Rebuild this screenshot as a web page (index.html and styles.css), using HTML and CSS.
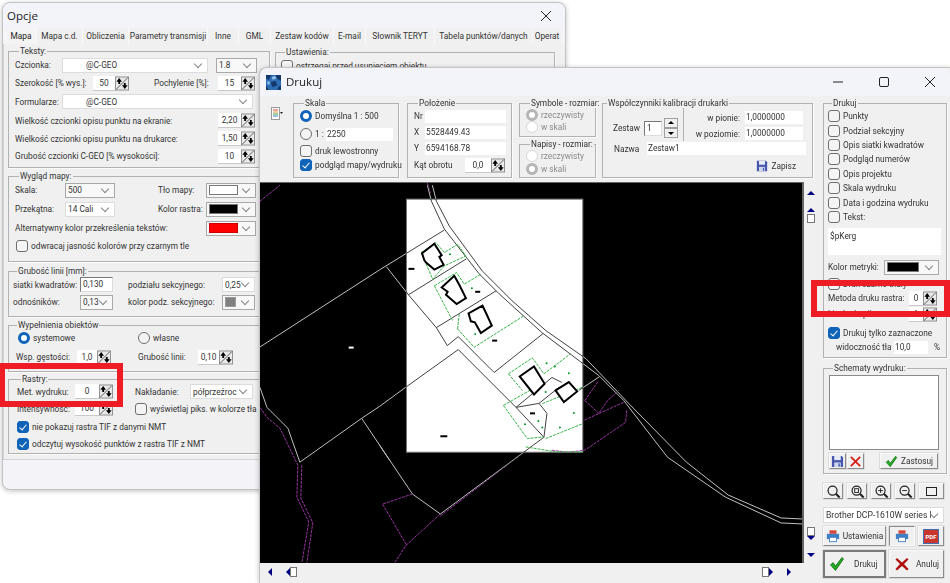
FILE: index.html
```html
<!DOCTYPE html>
<html lang="pl">
<head>
    <meta charset="UTF-8">
    <title>Opcje / Drukuj</title>
    <link rel="stylesheet" href="styles.css">
</head>
<body>
    <svg class="defs" aria-hidden="true">
        <symbol id="spin" viewBox="0 0 15 15">
            <rect x=".5" y=".5" width="14" height="14" fill="#e9e9e9" stroke="#8c8c8c"/>
            <path d="M1 14L14 1" stroke="#555" fill="none"/>
            <path d="M4.5 1.5L7.5 5.5H5.5V8H3.5V5.5H1.5Z M10.5 13.5L7.5 9.5H9.5V7H11.5V9.5H13.5Z" fill="#000"/>
        </symbol>
        <symbol id="floppy" viewBox="0 0 14 14">
            <path d="M1 1H11.5L13 2.5V13H1Z" fill="#4657ad"/>
            <rect x="3.5" y="1" width="7" height="4.5" fill="#e8ecf8"/>
            <rect x="3.5" y="8" width="7" height="5" fill="#d0d6ee"/>
            <rect x="8" y="9" width="1.5" height="3.5" fill="#4657ad"/>
        </symbol>
        <symbol id="redx" viewBox="0 0 14 14">
            <path d="M2 2L12 12M12 2L2 12" stroke="#d8201a" stroke-width="2" fill="none"/>
        </symbol>
        <symbol id="check" viewBox="0 0 16 16">
            <path d="M1.5 9L4 6.5L6.5 10L13 1.5L14.5 3L6.5 14.5Z" fill="#1faa1f" stroke="#0b5c0b" stroke-width=".7"/>
        </symbol>
        <symbol id="cross" viewBox="0 0 16 16">
            <path d="M3 2L8 6.5L13 2L14.5 3.5L10 8L14.5 13L13 14.5L8 10L3 14.5L1.5 13L6 8L1.5 3.5Z" fill="#b01010"/>
        </symbol>
        <symbol id="printer" viewBox="0 0 16 16">
            <rect x="4" y="1.5" width="8" height="4" fill="#d8453a"/>
            <rect x="1" y="5.5" width="14" height="6" fill="#3f7fc4"/>
            <rect x="4" y="9.5" width="8" height="5" fill="#fff" stroke="#3f7fc4"/>
        </symbol>
        <symbol id="glass" viewBox="0 0 16 16">
            <circle cx="7" cy="7" r="4.8" fill="none" stroke="#222" stroke-width="1.3"/>
            <path d="M10.5 10.5L14.5 14.5" stroke="#222" stroke-width="2.2"/>
        </symbol>
    </svg>

    <!-- okno opcji -->
    <div class="window options">
        <div class="titlebar">
            <span class="title">Opcje</span>
            <svg class="win-x" viewBox="0 0 10 10"><path d="M0 0L10 10M10 0L0 10"/></svg>
        </div>
        <div class="tabs">
            <span class="tab tab-active">Mapa</span>
            <span class="tab">Mapa c.d.</span>
            <span class="tab">Obliczenia</span>
            <span class="tab">Parametry transmisji</span>
            <span class="tab">Inne</span>
            <span class="tab">GML</span>
            <span class="tab">Zestaw kodów</span>
            <span class="tab">E-mail</span>
            <span class="tab">Słownik TERYT</span>
            <span class="tab">Tabela punktów/danych</span>
            <span class="tab">Operat</span>
        </div>
        <div class="panel">
            <div class="panel-left">
                <fieldset class="group g-teksty">
                    <legend>Teksty:</legend>
                    <div class="row">
                        <span class="lbl w47">Czcionka:</span>
                        <span class="combo w146"><span class="combo-text pad-font">@C-GEO</span><i class="chev"></i></span>
                        <span class="combo combo-raised w41 ml8"><span class="combo-text">1.8</span><i class="chev"></i></span>
                    </div>
                    <div class="row">
                        <span class="lbl w78">Szerokość [% wys.]:</span>
                        <span class="spin w36"><b class="spin-val">50</b><svg class="spin-btn"><use href="#spin"/></svg></span>
                        <span class="lbl w64 ml25">Pochylenie [%]:</span>
                        <span class="spin w37"><b class="spin-val">15</b><svg class="spin-btn"><use href="#spin"/></svg></span>
                    </div>
                    <div class="row">
                        <span class="lbl w47">Formularze:</span>
                        <span class="combo w191"><span class="combo-text pad-font">@C-GEO</span><i class="chev"></i></span>
                    </div>
                    <div class="row">
                        <span class="lbl w203">Wielkość czcionki opisu punktu na ekranie:</span>
                        <span class="spin w37"><b class="spin-val">2,20</b><svg class="spin-btn"><use href="#spin"/></svg></span>
                    </div>
                    <div class="row">
                        <span class="lbl w203">Wielkość czcionki opisu punktu na drukarce:</span>
                        <span class="spin w37"><b class="spin-val">1,50</b><svg class="spin-btn"><use href="#spin"/></svg></span>
                    </div>
                    <div class="row">
                        <span class="lbl w203">Grubość czcionki C-GEO [% wysokości]:</span>
                        <span class="spin w37"><b class="spin-val">10</b><svg class="spin-btn"><use href="#spin"/></svg></span>
                    </div>
                </fieldset>

                <fieldset class="group g-wyglad">
                    <legend>Wygląd mapy:</legend>
                    <div class="row">
                        <span class="lbl w50">Skala:</span>
                        <span class="combo combo-raised w50"><span class="combo-text">500</span><i class="chev"></i></span>
                        <span class="lbl w48 ml43">Tło mapy:</span>
                        <span class="combo combo-raised w50"><i class="swatch sw-white"></i><i class="chev"></i></span>
                    </div>
                    <div class="row">
                        <span class="lbl w50">Przekątna:</span>
                        <span class="combo w50"><span class="combo-text">14 Cali</span><i class="chev"></i></span>
                        <span class="lbl w48 ml43">Kolor rastra:</span>
                        <span class="combo combo-raised w50"><i class="swatch sw-black"></i><i class="chev"></i></span>
                    </div>
                    <div class="row">
                        <span class="lbl w191">Alternatywny kolor przekreślenia tekstów:</span>
                        <span class="combo combo-raised w50"><i class="swatch sw-red"></i><i class="chev"></i></span>
                    </div>
                    <label class="row"><i class="chk ml1"></i>odwracaj jasność kolorów przy czarnym tle</label>
                </fieldset>

                <fieldset class="group g-grubosc">
                    <legend>Grubość linii [mm]:</legend>
                    <div class="row">
                        <span class="lbl w67">siatki kwadratów:</span>
                        <span class="field field-sunken w33">0,130</span>
                        <span class="lbl w94 ml15">podziału sekcyjnego:</span>
                        <span class="combo w33"><span class="combo-text">0,25</span><i class="chev"></i></span>
                    </div>
                    <div class="row">
                        <span class="lbl w67">odnośników:</span>
                        <span class="combo combo-raised w33"><span class="combo-text">0,13</span><i class="chev"></i></span>
                        <span class="lbl w94 ml15">kolor podz. sekcyjnego:</span>
                        <span class="combo combo-raised w33"><i class="swatch sw-gray"></i><i class="chev"></i></span>
                    </div>
                </fieldset>

                <fieldset class="group g-wypelnienia">
                    <legend>Wypełnienia obiektów</legend>
                    <div class="row">
                        <i class="radio radio-on ml5"></i><span class="lbl w105">systemowe</span>
                        <i class="radio"></i><span>własne</span>
                    </div>
                    <div class="row">
                        <span class="lbl w61 ml3">Wsp. gęstości:</span>
                        <span class="spin w34"><b class="spin-val">1,0</b><svg class="spin-btn"><use href="#spin"/></svg></span>
                        <span class="lbl w60 ml27">Grubość linii:</span>
                        <span class="spin w35"><b class="spin-val">0,10</b><svg class="spin-btn"><use href="#spin"/></svg></span>
                    </div>
                </fieldset>

                <fieldset class="group g-rastry">
                    <legend>Rastry:</legend>
                    <div class="row">
                        <span class="lbl w58">Met. wydruku:</span>
                        <span class="spin w38"><b class="spin-val">0</b><svg class="spin-btn"><use href="#spin"/></svg></span>
                        <span class="lbl w55 ml22">Nakładanie:</span>
                        <span class="combo w63"><span class="combo-text">półprzeźroc</span><i class="chev"></i></span>
                    </div>
                    <div class="row">
                        <span class="lbl w58">Intensywność:</span>
                        <span class="spin w38"><b class="spin-val">100</b><svg class="spin-btn"><use href="#spin"/></svg></span>
                        <label class="check-inline ml22"><i class="chk"></i>wyświetlaj piks. w kolorze tła</label>
                    </div>
                    <label class="row"><i class="chk chk-on"></i>nie pokazuj rastra TIF z danymi NMT</label>
                    <label class="row"><i class="chk chk-on"></i>odczytuj wysokość punktów z rastra TIF z NMT</label>
                </fieldset>
            </div>
            <fieldset class="group g-ustawienia">
                <legend>Ustawienia:</legend>
                <label class="row"><i class="chk"></i>ostrzegaj przed usunięciem obiektu</label>
            </fieldset>
        </div>
    </div>

    <!-- okno wydruku -->
    <div class="window print">
        <div class="titlebar print-title">
            <svg class="app-icon" viewBox="0 0 16 16">
                <rect width="16" height="16" fill="#2f6cb3"/>
                <path d="M0 0H6L3 5L0 4Z M10 0H16V6L12 4Z M5 8L10 6L12 11L7 13Z M0 11L3 16H0Z M13 13L16 11V16H12Z" fill="#12386e"/>
                <path d="M6 2L10 1L11 4L7 5Z M1 7L4 7L4 10L2 10Z" fill="#8fc0ec"/>
            </svg>
            <span class="title">Drukuj</span>
            <div class="win-btns">
                <svg class="win-ctl" viewBox="0 0 10 10"><path d="M0 5H10"/></svg>
                <svg class="win-ctl" viewBox="0 0 10 10"><rect x=".5" y=".5" width="9" height="9" rx="1.5"/></svg>
                <svg class="win-ctl" viewBox="0 0 10 10"><path d="M0 0L10 10M10 0L0 10"/></svg>
            </div>
        </div>
        <div class="print-body">
            <div class="print-main">
                <div class="print-top">
                    <svg class="list-icon" viewBox="0 0 12 13">
                        <rect x=".5" y=".5" width="8" height="12" fill="#fff" stroke="#999"/>
                        <path d="M2 3H7" stroke="#d8453a"/><path d="M2 5H7" stroke="#e0a030"/>
                        <path d="M2 7H7" stroke="#3fa03f"/><path d="M2 9H7" stroke="#3f7fc4"/>
                        <path d="M9 5H12L10.5 7Z" fill="#222"/>
                    </svg>
                    <fieldset class="group g-skala">
                        <legend>Skala</legend>
                        <div class="row"><i class="radio radio-on"></i>Domyślna 1 : 500</div>
                        <div class="row"><i class="radio"></i><span class="lbl w11">1 :</span><span class="field w67">2250</span></div>
                        <label class="row"><i class="chk"></i>druk lewostronny</label>
                        <label class="row"><i class="chk chk-on"></i>podgląd mapy/wydruku</label>
                    </fieldset>
                    <fieldset class="group g-polozenie">
                        <legend>Położenie</legend>
                        <div class="row"><span class="lbl w11">Nr</span><span class="field w81"></span></div>
                        <div class="row"><span class="lbl w11">X</span><span class="field w81">5528449.43</span></div>
                        <div class="row"><span class="lbl w11">Y</span><span class="field w81">6594168.78</span></div>
                        <div class="row"><span class="lbl w51">Kąt obrotu</span><span class="spin w40"><b class="spin-val">0,0</b><svg class="spin-btn"><use href="#spin"/></svg></span></div>
                    </fieldset>
                    <div class="stack">
                        <fieldset class="group g-radio-sym">
                            <legend>Symbole - rozmiar:</legend>
                            <div class="row off"><i class="radio radio-dis"></i>rzeczywisty</div>
                            <div class="row off"><i class="radio radio-off"></i>w skali</div>
                        </fieldset>
                        <fieldset class="group g-radio-nap">
                            <legend>Napisy - rozmiar:</legend>
                            <div class="row off"><i class="radio radio-off"></i>rzeczywisty</div>
                            <div class="row off"><i class="radio radio-dis"></i>w skali</div>
                        </fieldset>
                    </div>
                    <fieldset class="group g-wsp">
                        <legend>Współczynniki kalibracji drukarki</legend>
                        <div class="wsp-top">
                            <div class="wsp-zestaw">
                                <span class="lbl w31">Zestaw</span>
                                <span class="field field-sunken w18">1</span>
                                <span class="updown"><i class="ud-up"></i><i class="ud-down"></i></span>
                            </div>
                            <div class="wsp-fields">
                                <div class="wsp-line"><span>w pionie:</span><span class="field w58">1,0000000</span></div>
                                <div class="wsp-line"><span>w poziomie:</span><span class="field w58">1,0000000</span></div>
                            </div>
                        </div>
                        <div class="wsp-name"><span class="lbl w33">Nazwa</span><span class="field w159">Zestaw1</span></div>
                        <div class="wsp-save"><svg class="ico12"><use href="#floppy"/></svg>Zapisz</div>
                    </fieldset>
                </div>
                <div class="map-row">
                    <svg class="map" viewBox="260 182 544 381">
                        <rect x="260" y="182" width="544" height="381" fill="#000"/>
                        <rect class="sheet" x="407" y="198" width="177" height="254"/>
                        <g class="ln-purple">
                            <path d="M260 200L280 184"/>
                            <path d="M260 407L267 417L280 428L298 465L297 497L309 522L302 563"/>
                            <path d="M302 465L301 498L313 523L307 563"/>
                            <path d="M441 514L407 545L395 563"/>
                            <path d="M413 494L383 504L407 545"/>
                            <path d="M441 516L525 452"/>
                            <path d="M625 402L585 420"/>
                            <path d="M628 410L627 422L586 450L569 452L553 450"/>
                            <path d="M586 400L600 413L609 400L620 390"/>
                            <path d="M586 400L600 380"/>
                            <path d="M428 182L431 192"/>
                        </g>
                        <g class="ln-diff">
                            <path d="M260 387L267 407L288 428L300 462L362 418L380 406L406 387L459 349L517 407L545 437"/>
                            <path d="M362 418L413 494L441 514L545 437"/>
                            <path d="M259 347L380 269L445 229"/>
                            <path d="M387 266L409 294L437 327L448 345L459 336L495 372L544 333"/>
                            <path d="M409 294L467 258"/>
                            <path d="M437 327L497 290"/>
                            <path d="M380 445L390 460"/>
                            <path d="M517 407L553 377L563 382"/>
                            <path d="M540 403L560 387"/>
                            <path d="M545 437L548 413L540 403L517 407"/>
                            <path d="M580 390L601 376"/>
                            <path d="M428 184L432 200L445 228L480 273L500 293L543 332L600 375L625 400L669 457L727 497L783 523L804 524"/>
                            <path d="M433 184L437 200L450 225L483 270L513 300L547 330L587 358L630 403L688 462L730 495L783 518L804 519"/>
                        </g>
                        <g class="ln-green" transform="translate(380 190) scale(.3333)">
                            <path d="M125 185L170 155L195 185L235 160L260 195L195 225L160 265Z"/>
                            <path d="M165 285L232 245L255 280L305 250M165 285L220 390"/>
                            <path d="M235 415L285 470L435 375M240 370L235 415"/>
                            <path d="M388 550L460 502L495 550L575 490M388 550L430 600"/>
                            <path d="M373 645L470 590M373 645L445 745L495 740M500 745L612 700M490 640L612 590"/>
                            <path d="M440 770L530 785L612 785"/>
                            <path class="dots" d="M212 190h.1M278 292h.1M288 430h.1M503 518h.1M570 548h.1M500 605h.1M478 692h.1M438 702h.1M490 712h.1M543 712h.1M585 668h.1M528 528h.1"/>
                        </g>
                        <g class="ln-bld" transform="translate(380 190) scale(.3333)">
                            <path d="M128 187L165 158L187 193L180 198L193 222L165 236L140 215L135 208Z"/>
                            <path d="M187 290L225 255L240 282L260 322L232 340L200 312L205 303Z"/>
                            <path d="M268 368L310 345L322 370L338 405L305 427L287 395L275 392Z"/>
                            <path d="M422 558L465 528L497 580L465 612Z"/>
                            <path d="M530 600L570 575L595 603L555 635Z"/>
                        </g>
                        <g class="map-tags">
                            <rect x="409" y="267" width="6" height="2"/>
                            <rect x="476" y="290" width="5" height="2"/>
                            <rect x="493" y="339" width="5" height="2"/>
                            <rect x="531" y="412" width="5" height="2"/>
                            <rect x="441" y="435" width="7" height="2"/>
                        </g>
                        <rect x="349" y="346" width="5" height="2" fill="#fff"/>
                    </svg>
                    <div class="vscroll">
                        <i class="arr arr-up"></i>
                        <i class="arr arr-up arr-gap"></i>
                        <i class="thumb thumb-top"></i>
                        <i class="thumb thumb-low"></i>
                        <i class="arr arr-down"></i>
                        <i class="arr arr-down arr-gap2"></i>
                    </div>
                </div>
                <div class="hscroll">
                    <i class="arr arr-left"></i>
                    <i class="arr arr-left arr-gap-l"></i>
                    <i class="thumb thumb-h"></i>
                    <i class="thumb thumb-h thumb-h-end"></i>
                    <i class="arr arr-right"></i>
                    <i class="arr arr-right arr-gap-r"></i>
                </div>
            </div>

            <div class="print-side">
                <fieldset class="group g-drukuj">
                    <legend>Drukuj</legend>
                    <label class="chk-row"><i class="chk"></i>Punkty</label>
                    <label class="chk-row"><i class="chk"></i>Podział sekcyjny</label>
                    <label class="chk-row"><i class="chk"></i>Opis siatki kwadratów</label>
                    <label class="chk-row"><i class="chk"></i>Podgląd numerów</label>
                    <label class="chk-row"><i class="chk"></i>Opis projektu</label>
                    <label class="chk-row"><i class="chk"></i>Skala wydruku</label>
                    <label class="chk-row"><i class="chk"></i>Data i godzina wydruku</label>
                    <label class="chk-row"><i class="chk"></i>Tekst:</label>
                    <div class="memo">$pKerg</div>
                    <div class="side-row mt5">
                        <span class="lbl w56">Kolor metryki:</span>
                        <span class="combo combo-raised w55"><i class="swatch sw-black sw-wide"></i><i class="chev"></i></span>
                    </div>
                    <label class="side-row mt3"><i class="chk"></i>Druk czarno-biały</label>
                    <div class="side-row">
                        <span class="lbl w81">Metoda druku rastra:</span>
                        <span class="spin w28"><b class="spin-val">0</b><svg class="spin-btn"><use href="#spin"/></svg></span>
                    </div>
                    <div class="side-row mt2">
                        <span class="lbl w81">Liczba kopii:</span>
                        <span class="spin w28"><b class="spin-val">1</b><svg class="spin-btn"><use href="#spin"/></svg></span>
                    </div>
                    <label class="side-row mt5"><i class="chk chk-on"></i>Drukuj tylko zaznaczone</label>
                    <div class="side-row pl8">
                        <span class="lbl w58">widoczność tła</span>
                        <span class="field w34">10,0</span>
                        <span class="pct">%</span>
                    </div>
                </fieldset>
                <fieldset class="group g-schematy">
                    <legend>Schematy wydruku:</legend>
                    <div class="schema-list"></div>
                    <div class="schema-btns">
                        <span class="btn btn-ico"><svg class="ico13"><use href="#floppy"/></svg></span>
                        <span class="btn btn-ico"><svg class="ico13"><use href="#redx"/></svg></span>
                        <span class="btn btn-apply"><svg class="ico13"><use href="#check"/></svg>Zastosuj</span>
                    </div>
                </fieldset>
                <div class="tools">
                    <span class="btn btn-tool"><svg class="ico15"><use href="#glass"/></svg></span>
                    <span class="btn btn-tool"><svg class="ico15" viewBox="0 0 16 16"><use href="#glass"/><rect x="5" y="5" width="4" height="4" fill="none" stroke="#222"/></svg></span>
                    <span class="btn btn-tool"><svg class="ico15" viewBox="0 0 16 16"><use href="#glass"/><path d="M4.5 7H9.5M7 4.5V9.5" stroke="#222"/></svg></span>
                    <span class="btn btn-tool"><svg class="ico15" viewBox="0 0 16 16"><use href="#glass"/><path d="M4.5 7H9.5" stroke="#222"/></svg></span>
                    <span class="btn btn-tool btn-wide"><i class="tool-rect"></i></span>
                </div>
                <div class="combo printer-combo"><span class="combo-text">Brother DCP-1610W series P</span><i class="chev"></i></div>
                <div class="print-row">
                    <span class="btn btn-setup"><svg class="ico14"><use href="#printer"/></svg>Ustawienia</span>
                    <span class="btn btn-toggle"><svg class="ico14"><use href="#printer"/></svg></span>
                    <span class="btn btn-pdf"><span class="pdf">PDF</span></span>
                </div>
                <div class="action-row">
                    <span class="btn btn-print"><svg class="ico16"><use href="#check"/></svg><span class="print-label">Drukuj</span></span>
                    <span class="btn btn-cancel"><svg class="ico16"><use href="#cross"/></svg>Anuluj</span>
                </div>
            </div>
        </div>
    </div>

    <!-- czerwone ramki z opisu -->
    <div class="mark mark-left"></div>
    <div class="mark mark-right"></div>
</body>
</html>
```

FILE: styles.css
```css
html, body {
    margin: 0;
    height: 100%;
    overflow: hidden;
}
body {
    position: relative;
    width: 950px;
    height: 583px;
    background: #fff;
    font-family: Roboto, "Liberation Sans", Arial, sans-serif;
    font-size: 8.3px;
    line-height: 10px;
    color: #333;
}
.defs {
    position: absolute;
    width: 0;
    height: 0;
}

/* windows */
.window {
    position: absolute;
    box-sizing: border-box;
    background: #f0f0f0;
    border: 1px solid #c4c4c4;
    border-radius: 8px;
    box-shadow: 0 1px 5px rgba(0, 0, 0, .25);
}
.options {
    left: 2px;
    top: 2px;
    width: 564px;
    height: 488px;
    background: #f3f3f8;
}
.print {
    left: 259px;
    top: 67px;
    width: 691px;
    height: 516px;
    border-right: 0;
    border-bottom: 0;
    border-radius: 8px 0 0 0;
    z-index: 2;
    overflow: hidden;
}
.titlebar {
    display: flex;
    align-items: center;
    height: 25px;
    padding: 0 14px 0 4px;
    background: #f3f3fa;
    border-radius: 8px 8px 0 0;
}
.title {
    font-family: "Open Sans", sans-serif;
    font-size: 11.5px;
    color: #222;
}
.win-x {
    width: 10px;
    height: 10px;
    margin-left: auto;
    fill: none;
    stroke: #222;
}
.print-title {
    height: 28px;
    padding: 0 0 0 6px;
}
.app-icon {
    width: 15px;
    height: 15px;
    margin-right: 5px;
}
.win-btns {
    display: grid;
    grid-template-columns: 46px 46px 46px;
    justify-items: center;
    flex: none;
    margin: 0 -3px 0 auto;
}
.win-ctl {
    width: 10px;
    height: 10px;
    fill: none;
    stroke: #222;
}

/* tabs */
.tabs {
    display: grid;
    grid-template-columns: 31px 46px 46px 79px 31px 32px 63px 32px 69px 98px 29px;
    height: 16px;
    padding-left: 2px;
}
.tab {
    display: flex;
    align-items: center;
    justify-content: center;
    white-space: nowrap;
    background: #f0f0f0;
    border-left: 1px solid #f8f8fb;
}
.tab-active {
    background: #f4f4f4;
    color: #222;
}
.panel {
    display: flex;
    gap: 5px;
    box-sizing: border-box;
    height: 416px;
    padding: 2px 0 0 4px;
    background: #f0f0f0;
    border-bottom: 1px solid #d4d4d4;
    border-left: 1px solid #d4d4d4;
}
.panel-left {
    display: flex;
    flex-direction: column;
    width: 262px;
    flex: none;
}

/* group boxes */
.group {
    display: grid;
    box-sizing: border-box;
    margin: 0;
    padding: 0;
    min-width: 0;
    border: 1px solid #b2b2b2;
    box-shadow: 1px 1px 0 #fafafa;
    align-content: start;
}
.group legend {
    margin-left: 4px;
    padding: 0 1px;
    line-height: 10px;
    height: 10px;
    white-space: nowrap;
    color: #333;
}
.row, .side-row, .chk-row {
    display: flex;
    align-items: center;
    white-space: nowrap;
}
.g-teksty {
    height: 122px;
    padding-left: 6px;
    grid-template-rows: 18px 18px 19px 19px 17px 18px;
}
.g-wyglad {
    height: 91px;
    margin-top: 3px;
    padding-left: 6px;
    grid-template-rows: 18px 20px 18px 18px;
}
.g-grubosc {
    height: 51px;
    margin-top: 4px;
    padding-left: 4px;
    grid-template-rows: 17px 18px;
}
.g-wypelnienia {
    height: 52px;
    margin-top: 3px;
    padding-left: 4px;
    grid-template-rows: 16px 22px;
}
.g-rastry {
    height: 80px;
    margin-top: 2px;
    padding-left: 8px;
    grid-template-rows: 15px 19px 18px 16px;
}
.g-ustawienia {
    width: 280px;
    height: 200px;
    margin-top: 1px;
    padding-left: 5px;
    grid-template-rows: 18px;
}

/* labels and widths */
.lbl {
    display: block;
    flex: none;
    white-space: nowrap;
}
.w11 { width: 11px; }
.w18 { width: 18px; }
.w28 { width: 28px; }
.w31 { width: 31px; }
.w33 { width: 33px; }
.w34 { width: 34px; }
.w35 { width: 35px; }
.w36 { width: 36px; }
.w37 { width: 37px; }
.w38 { width: 38px; }
.w40 { width: 40px; }
.w41 { width: 41px; }
.w47 { width: 47px; }
.w48 { width: 48px; }
.w50 { width: 50px; }
.w51 { width: 51px; }
.w55 { width: 55px; }
.w56 { width: 56px; }
.w58 { width: 58px; }
.w60 { width: 60px; }
.w61 { width: 61px; }
.w63 { width: 63px; }
.w64 { width: 64px; }
.w67 { width: 67px; }
.w78 { width: 78px; }
.w81 { width: 81px; }
.w94 { width: 94px; }
.w105 { width: 105px; }
.w146 { width: 146px; }
.w159 { width: 159px; }
.w191 { width: 191px; }
.w203 { width: 203px; }
.ml1 { margin-left: 1px; }
.ml3 { margin-left: 3px; }
.ml5 { margin-left: 5px; }
.ml8 { margin-left: 8px; }
.ml15 { margin-left: 15px; }
.ml22 { margin-left: 22px; }
.ml25 { margin-left: 25px; }
.ml27 { margin-left: 27px; }
.ml43 { margin-left: 43px; }
.mt2 { margin-top: 2px; }
.mt3 { margin-top: 3px; }
.mt5 { margin-top: 5px; }
.pl8 { padding-left: 8px; }

/* combos */
.combo {
    display: flex;
    flex: none;
    align-items: center;
    box-sizing: border-box;
    height: 15px;
    padding: 0 5px 0 2px;
    background: #fff;
    border: 1px solid #dcdcdc;
}
.combo-raised {
    border-color: #a9a9a9;
    background: #f8f8f8;
}
.combo-text {
    flex: 1;
    min-width: 0;
    overflow: hidden;
    white-space: nowrap;
}
.pad-font {
    padding-left: 21px;
}
.chev {
    flex: none;
    width: 5px;
    height: 5px;
    margin: -3px 1px 0 auto;
    border-right: 1px solid #858585;
    border-bottom: 1px solid #858585;
    transform: rotate(45deg);
}
.swatch {
    width: 29px;
    height: 10px;
    flex: none;
    box-sizing: border-box;
    border: 1px solid #777;
}
.sw-wide {
    width: 32px;
}
.w33 .swatch {
    width: 11px;
}
.sw-white { background: #fff; }
.sw-black { background: #000; }
.sw-red { background: #f00; border-color: #c00; }
.sw-gray { background: #808080; border-color: #999; }

/* spin edits */
.spin {
    display: flex;
    flex: none;
    align-items: center;
    height: 15px;
}
.spin-val {
    flex: 1;
    height: 14px;
    line-height: 14px;
    font-weight: normal;
    text-align: center;
    background: #fff;
    border-bottom: 1px solid #c8c8c8;
}
.spin-btn {
    flex: none;
    width: 14px;
    height: 15px;
}

/* plain edits */
.field {
    display: block;
    flex: none;
    box-sizing: border-box;
    height: 13px;
    padding-left: 1px;
    line-height: 12px;
    background: #fff;
}
.field-sunken {
    height: 15px;
    line-height: 13px;
    border: 1px solid;
    border-color: #777 #dcdcdc #dcdcdc #777;
    padding-left: 2px;
}

/* checks and radios */
.chk {
    flex: none;
    box-sizing: border-box;
    width: 12px;
    height: 12px;
    margin-right: 3px;
    border: 1px solid #6f6f6f;
    border-radius: 3px;
    background: #f4f4f4;
    position: relative;
}
.chk-on {
    background: #0f63b8;
    border-color: #0f63b8;
}
.chk-on::after {
    content: "";
    position: absolute;
    left: 3px;
    top: 1px;
    width: 3px;
    height: 6px;
    border-right: 1px solid #fff;
    border-bottom: 1px solid #fff;
    transform: rotate(40deg);
}
.check-inline {
    display: flex;
    align-items: center;
    white-space: nowrap;
}
.radio {
    flex: none;
    box-sizing: border-box;
    width: 12px;
    height: 12px;
    margin-right: 3px;
    border: 1px solid #6f6f6f;
    border-radius: 50%;
    background: #f4f4f4;
}
.radio-on {
    background: #fff;
    border: 3.5px solid #0f63b8;
}
.radio-dis {
    background: #fff;
    border: 3.5px solid #b5b5b5;
}
.radio-off {
    background: #fff;
    border: 1px solid #d8d8d8;
}
.off {
    color: #8a8a8a;
}

/* print window */
.print-body {
    display: flex;
}
.print-main {
    width: 563px;
    flex: none;
}
.print-top {
    display: flex;
    height: 86px;
    padding-top: 2px;
    box-sizing: border-box;
}
.list-icon {
    flex: none;
    width: 12px;
    height: 13px;
    margin: 9px 10px 0 11px;
}
.g-skala {
    width: 106px;
    height: 80px;
    padding-left: 6px;
    grid-template-rows: 16px 20px 13px 16px;
}
.g-polozenie {
    width: 105px;
    height: 80px;
    margin-left: 8px;
    padding-left: 6px;
    grid-template-rows: 16px 16px 16px 18px;
}
.stack {
    width: 77px;
    margin-left: 7px;
}
.g-radio-sym, .g-radio-nap {
    height: 39px;
    padding-left: 6px;
}
.g-radio-sym {
    grid-template-rows: 14px 10px;
}
.g-radio-nap {
    margin-top: 2px;
    grid-template-rows: 14px 11px;
}
.g-wsp {
    width: 211px;
    height: 80px;
    margin-left: 6px;
}
.wsp-top {
    display: flex;
    height: 33px;
}
.wsp-zestaw {
    display: flex;
    align-items: center;
    width: 81px;
    height: 33px;
    padding: 7px 0 0 10px;
    box-sizing: border-box;
    border-right: 1px solid #b2b2b2;
}
.updown {
    display: flex;
    flex-direction: column;
    margin-left: 2px;
}
.ud-up, .ud-down {
    position: relative;
    display: block;
    box-sizing: border-box;
    width: 14px;
    height: 10px;
    background: #f0f0f0;
    border: 1px solid #a0a0a0;
}
.ud-up::after, .ud-down::after {
    content: "";
    position: absolute;
    left: 3px;
    border-left: 3px solid transparent;
    border-right: 3px solid transparent;
}
.ud-up::after {
    top: 2px;
    border-bottom: 3px solid #000;
}
.ud-down::after {
    top: 3px;
    border-top: 3px solid #000;
}
.wsp-fields {
    display: grid;
    gap: 3px;
    padding-top: 3px;
    align-content: start;
    width: 119px;
}
.wsp-line {
    display: flex;
    justify-content: flex-end;
    align-items: center;
    gap: 5px;
    height: 13px;
}
.wsp-name {
    display: flex;
    align-items: center;
    height: 13px;
    margin-top: 1px;
    padding-left: 11px;
}
.wsp-save {
    display: flex;
    align-items: center;
    justify-content: flex-end;
    gap: 3px;
    height: 16px;
    padding-right: 16px;
    margin-top: 3px;
}
.ico12 { width: 12px; height: 12px; flex: none; }
.ico13 { width: 13px; height: 13px; flex: none; }
.ico14 { width: 14px; height: 14px; flex: none; }
.ico15 { width: 15px; height: 15px; flex: none; }
.ico16 { width: 16px; height: 16px; flex: none; }

/* map */
.map-row {
    display: flex;
    height: 381px;
}
.map {
    display: block;
    flex: none;
    width: 544px;
    height: 381px;
    border-top: 1px solid #666;
    border-right: 2px solid #666;
    box-sizing: border-box;
    background: #000;
}
.sheet {
    fill: #fff;
    stroke: #777;
}
.ln-purple path {
    fill: none;
    stroke: #9a35a5;
    stroke-dasharray: 3 1;
}
.ln-diff {
    mix-blend-mode: difference;
}
.ln-diff path {
    fill: none;
    stroke: #c0c0c0;
}
.ln-green path {
    fill: none;
    stroke: #39b54a;
    stroke-dasharray: 3 1;
    vector-effect: non-scaling-stroke;
}
.ln-green .dots {
    stroke: #0a9a2a;
    stroke-width: 2px;
    stroke-linecap: round;
    stroke-dasharray: none;
}
.ln-bld path {
    fill: #fff;
    stroke: #000;
    stroke-width: 2px;
    vector-effect: non-scaling-stroke;
}
.map-tags rect {
    fill: #000;
}

/* scrollers */
.vscroll {
    display: flex;
    flex-direction: column;
    align-items: center;
    width: 19px;
    flex: none;
    padding: 9px 6px 0 0;
    box-sizing: border-box;
}
.arr {
    display: block;
    flex: none;
    width: 0;
    height: 0;
}
.arr-up {
    border-left: 4px solid transparent;
    border-right: 4px solid transparent;
    border-bottom: 4px solid #000080;
}
.arr-down {
    border-left: 4px solid transparent;
    border-right: 4px solid transparent;
    border-top: 4px solid #000080;
}
.arr-left {
    border-top: 4px solid transparent;
    border-bottom: 4px solid transparent;
    border-right: 4px solid #000080;
}
.arr-right {
    border-top: 4px solid transparent;
    border-bottom: 4px solid transparent;
    border-left: 4px solid #000080;
}
.arr-gap {
    margin-top: 13px;
}
.thumb {
    display: block;
    flex: none;
    box-sizing: border-box;
    width: 8px;
    height: 9px;
    background: #fff;
    border: 1px solid #777;
}
.thumb-top {
    margin-top: 2px;
}
.thumb-low {
    margin-top: 304px;
}
.arr-gap2 {
    margin-top: 13px;
}
.hscroll {
    display: flex;
    align-items: center;
    height: 18px;
    padding-left: 8px;
    box-sizing: border-box;
}
.arr-gap-l {
    margin-left: 14px;
}
.thumb-h {
    width: 7px;
    height: 10px;
}
.thumb-h-end {
    margin-left: 465px;
}
.arr-gap-r {
    margin-left: 14px;
}

/* side column */
.print-side {
    width: 124px;
    flex: none;
    padding-top: 2px;
}
.g-drukuj {
    height: 260px;
    padding: 1px 0 0 4px;
    display: block;
}
.chk-row {
    height: 14.4px;
}
.memo {
    box-sizing: border-box;
    width: 113px;
    height: 27px;
    margin-top: 4px;
    padding: 3px 2px;
    background: #fff;
}
.side-row {
    height: 14px;
}
.pct {
    margin-left: 6px;
}
.g-schematy {
    display: block;
    height: 111px;
    margin-top: 5px;
    padding-left: 5px;
}
.schema-list {
    box-sizing: border-box;
    width: 110px;
    height: 75px;
    margin-top: 2px;
    background: #fff;
    border: 1px solid #8a8a8a;
}
.schema-btns {
    display: flex;
    margin-top: 3px;
}

/* buttons */
.btn {
    display: flex;
    flex: none;
    align-items: center;
    justify-content: center;
    box-sizing: border-box;
    background: #f0f0f0;
    border: 1px solid;
    border-color: #fafafa #8c8c8c #8c8c8c #fafafa;
    box-shadow: 0 0 0 .5px #c8c8c8;
}
.btn-ico {
    width: 17px;
    height: 16px;
    margin-right: 1px;
}
.btn-apply {
    gap: 3px;
    width: 58px;
    height: 16px;
    margin-left: 15px;
}
.tools {
    display: flex;
    gap: 4px;
    margin-top: 9px;
}
.btn-tool {
    width: 20px;
    height: 16px;
}
.btn-wide {
    width: 25px;
}
.tool-rect {
    width: 9px;
    height: 7px;
    border: 1px solid #222;
}
.printer-combo {
    width: 121px;
    height: 16px;
    margin-top: 8px;
    font-size: 8.6px;
}
.print-row {
    display: flex;
    gap: 3px;
    margin-top: 3px;
}
.btn-setup {
    gap: 3px;
    width: 63px;
    height: 20px;
}
.btn-toggle {
    width: 26px;
    height: 20px;
    border-color: #8c8c8c #fafafa #fafafa #8c8c8c;
}
.btn-pdf {
    width: 26px;
    height: 20px;
}
.pdf {
    display: block;
    width: 14px;
    height: 13px;
    line-height: 13px;
    font-size: 6px;
    font-weight: bold;
    text-align: center;
    color: #fff;
    background: #c9372c;
    border: 1px solid #3f6fb0;
}
.action-row {
    display: flex;
    gap: 3px;
    margin-top: 4px;
}
.btn-print {
    justify-content: flex-start;
    width: 63px;
    height: 28px;
    padding-left: 4px;
    border: 2px solid #7a7a7a;
}
.print-label {
    margin-left: 9px;
}
.btn-cancel {
    gap: 6px;
    width: 55px;
    height: 28px;
}

/* red highlight frames */
.mark {
    position: absolute;
    box-sizing: border-box;
    border: 6px solid #ee1c25;
    z-index: 3;
}
.mark-left {
    left: -1px;
    top: 363px;
    width: 124px;
    height: 44px;
}
.mark-right {
    left: 811px;
    top: 280px;
    width: 139px;
    height: 37px;
}
```
